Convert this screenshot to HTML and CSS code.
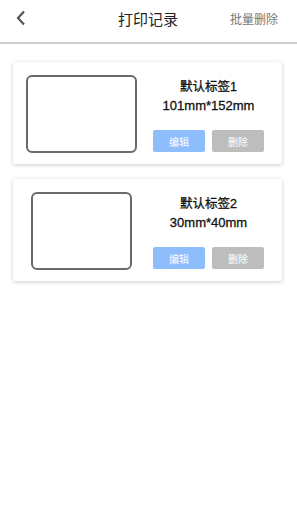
FILE: index.html
```html
<!DOCTYPE html>
<html lang="zh">

<head>
    <meta charset="UTF-8">
    <meta name="viewport" content="width=device-width, initial-scale=1.0">
    <title>打印记录</title>
    <link rel="stylesheet" href="styles.css">
</head>

<body>
    <div class="header">
        <span class="back">
            <svg width="12" height="16" viewBox="0 0 12 16">
                <path d="M9 1.5 L3 8 L9 14.5" fill="none" stroke="#555" stroke-width="2.2" />
            </svg>
        </span>
        <span class="title">打印记录</span>
        <span class="batch">批量删除</span>
    </div>

    <div class="list">
        <div class="card">
            <div class="preview">
                <div class="label-box wide"></div>
            </div>
            <div class="info">
                <div class="name">默认标签1</div>
                <div class="size">101mm*152mm</div>
                <div class="actions">
                    <button class="btn edit">编辑</button>
                    <button class="btn delete">删除</button>
                </div>
            </div>
        </div>
        <div class="card">
            <div class="preview">
                <div class="label-box narrow"></div>
            </div>
            <div class="info">
                <div class="name">默认标签2</div>
                <div class="size">30mm*40mm</div>
                <div class="actions">
                    <button class="btn edit">编辑</button>
                    <button class="btn delete">删除</button>
                </div>
            </div>
        </div>
    </div>
</body>

</html>
```

FILE: styles.css
```css
body {
    margin: 0;
    padding: 0;
    background-color: #fff;
    font-family: "Liberation Sans", "Noto Sans CJK SC", sans-serif;
    color: #222;
}

.header {
    height: 42px;
    border-bottom: 2px solid #cfcfcf;
    display: flex;
    align-items: center;
    justify-content: space-between;
    padding: 0 19px 0 15px;
}

.back {
    width: 60px;
    display: flex;
    align-items: center;
    margin-top: -6px;
}

.title {
    font-size: 15px;
    color: #222;
    margin-top: -6px;
    margin-left: 3px;
}

.batch {
    width: 60px;
    text-align: right;
    font-size: 12px;
    color: #777;
    margin-top: -6px;
}

.list {
    padding: 18px 15px 10px 13px;
    display: flex;
    flex-direction: column;
    gap: 15px;
}

.card {
    height: 102px;
    box-sizing: border-box;
    background-color: #fff;
    box-shadow: 0 1px 4px rgba(0, 0, 0, 0.2);
    border-radius: 2px;
    display: flex;
    padding: 13px 18px 11px 13px;
}

.preview {
    width: 111px;
    height: 78px;
    display: flex;
    justify-content: center;
}

.label-box {
    height: 78px;
    box-sizing: border-box;
    border: 2px solid #6a6a6a;
    border-radius: 6px;
}

.wide {
    width: 111px;
}

.narrow {
    width: 101px;
}

.info {
    flex: 1;
    display: flex;
    flex-direction: column;
    align-items: center;
    margin-left: 16px;
}

.name,
.size {
    color: #111;
    line-height: 16px;
    -webkit-text-stroke: 0.3px #111;
}

.name {
    font-size: 12.5px;
    margin-top: 4px;
}

.size {
    font-size: 13px;
    margin-top: 3px;
}

.actions {
    display: flex;
    gap: 7px;
    margin-top: auto;
    margin-bottom: 1px;
}

.btn {
    width: 52px;
    height: 22px;
    border: none;
    border-radius: 2px;
    color: #fff;
    font-size: 10px;
    font-family: "Liberation Sans", "Noto Sans CJK SC", sans-serif;
    padding: 0;
}

.edit {
    background-color: #8dbdfb;
}

.delete {
    background-color: #bdbdbd;
}
```
